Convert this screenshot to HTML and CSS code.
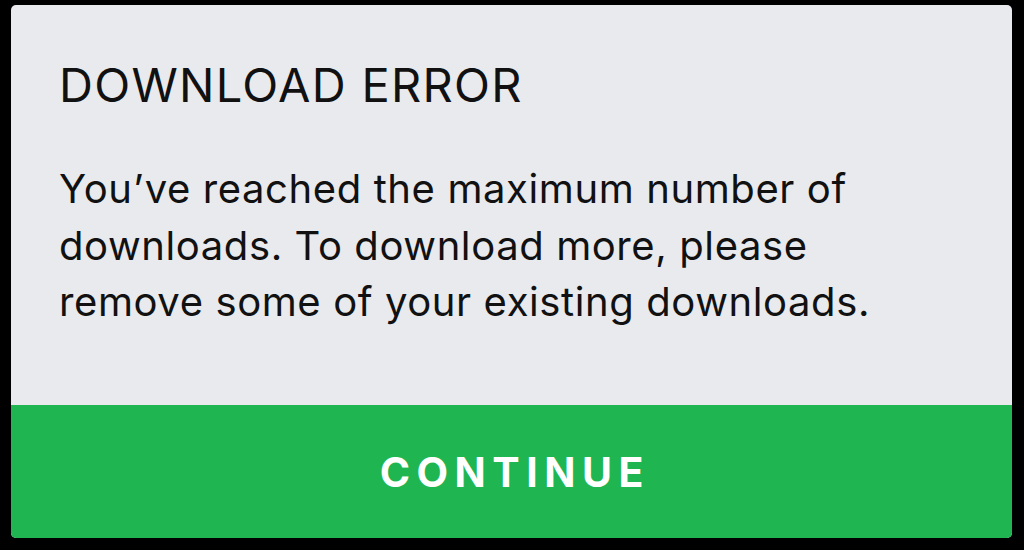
FILE: index.html
```html
<!DOCTYPE html>
<html lang="en">
<head>
<meta charset="utf-8">
<link rel="stylesheet" href="styles.css">
</head>
<body>
<div class="dialog">
  <div class="content">
    <h1 class="title">DOWNLOAD ERROR</h1>
    <p class="message">You’ve reached the maximum number of downloads. To download more, please remove some of your existing downloads.</p>
  </div>
  <div class="action">CONTINUE</div>
</div>
</body>
</html>
```
FILE: styles.css
```css
html, body {
  margin: 0;
  padding: 0;
  background: #000;
  width: 1024px;
  height: 550px;
  overflow: hidden;
}
body {
  padding: 5px 12px 12px 11px;
  box-sizing: border-box;
  font-family: "Inter", "Liberation Sans", sans-serif;
}
.dialog {
  height: 533px;
  border-radius: 5px;
  overflow: hidden;
  display: flex;
  flex-direction: column;
  background: #e9eaee;
}
.content {
  flex: 1;
  padding: 52px 40px 0 48px;
}
.title {
  margin: 0;
  font-size: 47px;
  font-weight: 400;
  color: #111;
  line-height: 56px;
  letter-spacing: 1.3px;
}
.message {
  margin: 48px 0 0;
  font-size: 40px;
  line-height: 56.5px;
  color: #111;
  width: 860px;
  letter-spacing: 0.6px;
}
.action {
  height: 133px;
  background: #1fb652;
  color: #fff;
  display: flex;
  align-items: center;
  justify-content: center;
  font-size: 41px;
  font-weight: 700;
  letter-spacing: 6.5px;
  padding-left: 6.5px;
}
```
